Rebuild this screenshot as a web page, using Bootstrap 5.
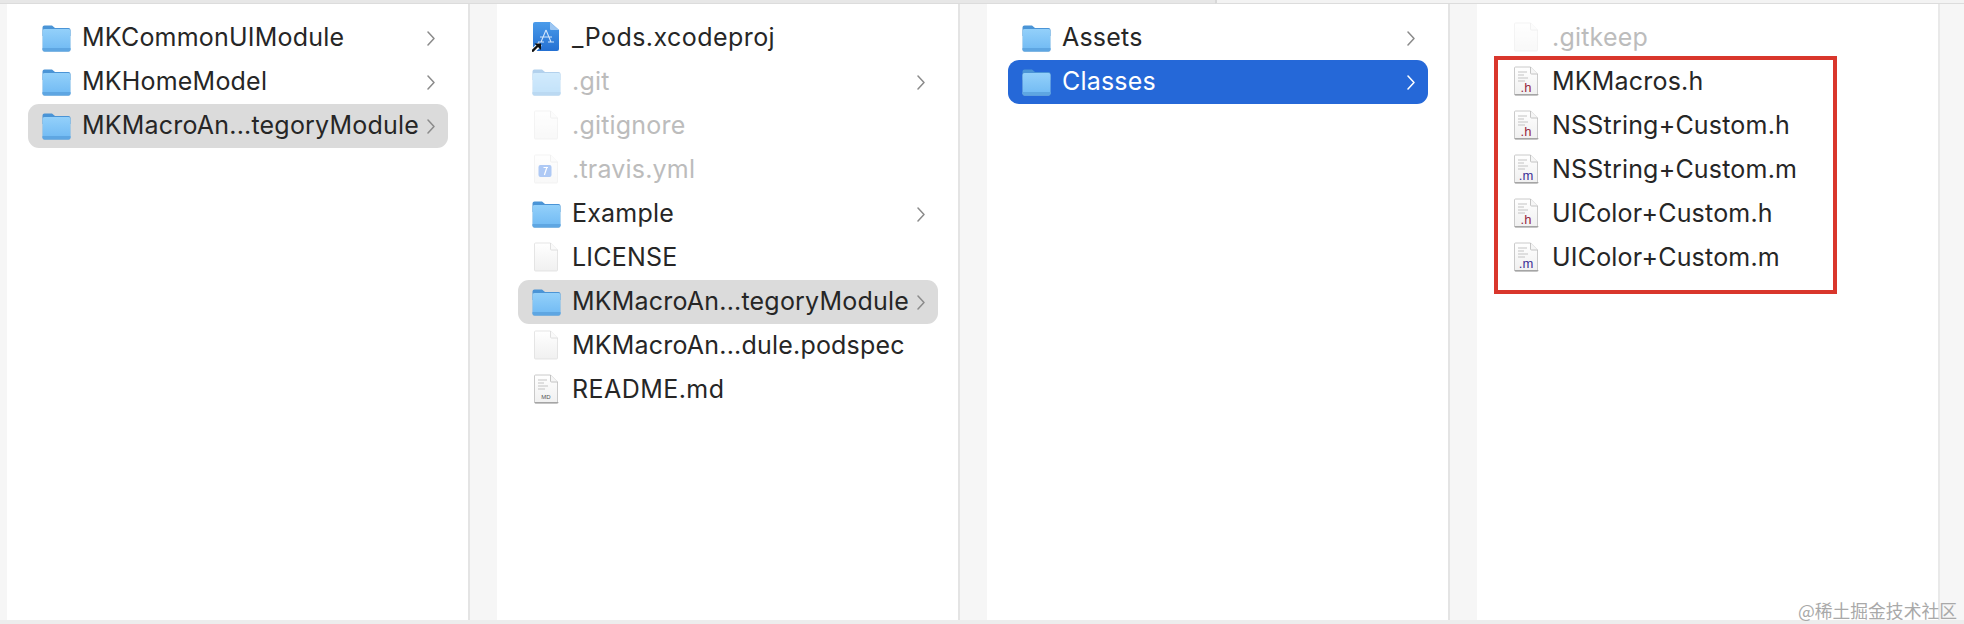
<!DOCTYPE html>
<html lang="en">
<head>
<meta charset="utf-8">
<title>Finder</title>
<link rel="stylesheet" href="https://cdn.jsdelivr.net/npm/bootstrap@5.3.0/dist/css/bootstrap.min.css">
<style>
html,body{height:624px;overflow:hidden;background:#f6f6f6}
body{font-family:Inter,"Liberation Sans",sans-serif;font-size:25px;color:#262626}
.topstrip{height:4px}
.topa{width:1215px;background:#e7e7e7;border-bottom:1px solid #dcdcdc}
.topb{background:#f3f3f3;border-bottom:1px solid #dcdcdc;border-left:2px solid #d8d8d8}
.browser{height:616px;padding-left:7px}
.pane{width:461px;background:#fff;padding-top:12px}
.gutter{width:29px;border-left:2px solid #e4e4e4;background:#f6f6f6}
.gutter-end{width:26px;border-left:2px solid #e9e9e9}
.entry{height:44px;margin-left:21px;margin-right:20px;padding-left:14px;padding-right:13px;border-radius:11px;white-space:nowrap}
.entry svg.ico{width:29px;height:30px;flex:none;margin-right:11px;margin-bottom:2px}
.fname{flex:1 1 auto;letter-spacing:.2px;line-height:42px;margin-bottom:2px}
.fname.wide{letter-spacing:.45px}
.chev{width:8px;height:15px;flex:none;fill:none;stroke:#8b8b8b;stroke-width:1.5;stroke-linecap:round;stroke-linejoin:round}
.hidden-file .fname{color:#bcbcbc}
.hidden-file svg.ico{opacity:.42}
.on-gray{background:#dbdbdb}
.on-blue{background:#2568d8;color:#fff}
.on-blue .chev{stroke:#fff}
.redbox{margin-left:17px;margin-right:101px;margin-top:-4px;border:4px solid #d9362c;padding-bottom:10px}
.redbox .entry{margin-left:0;margin-right:0;padding-left:14px}
.strip-bottom{height:4px;background:#ededed}
.jj-mark{position:absolute;right:7px;bottom:3px;font-family:"Noto Sans CJK SC",sans-serif;font-size:17.8px;line-height:22px;color:#a9a9a9}
</style>
</head>
<body class="position-relative m-0">
<svg width="0" height="0" class="position-absolute">
  <defs>
    <linearGradient id="fg" x1="0" y1="0" x2="0" y2="1"><stop offset="0" stop-color="#93d0fa"/><stop offset="1" stop-color="#6fb9f3"/></linearGradient>
    <linearGradient id="dg" x1="0" y1="0" x2="0" y2="1"><stop offset="0" stop-color="#ffffff"/><stop offset="1" stop-color="#f0f0f0"/></linearGradient>
    <linearGradient id="xg" x1="0" y1="0" x2="0" y2="1"><stop offset="0" stop-color="#4a9bea"/><stop offset="1" stop-color="#2470d2"/></linearGradient>
    <symbol id="folder" viewBox="0 0 29 30">
      <path d="M0.5 5.5a2 2 0 0 1 2-2h7.5l3 2.6h13.5a2 2 0 0 1 2 2v6H0.5z" fill="#4a94d6"/>
      <rect x="0.5" y="7.2" width="28" height="23" rx="2" fill="#8a8f96" opacity=".35" transform="translate(0 -.2)"/>
      <rect x="0.5" y="7" width="28" height="22.4" rx="2" fill="url(#fg)"/>
      <path d="M0.5 26h28v1.4a2 2 0 0 1-2 2h-24a2 2 0 0 1-2-2z" fill="#5ea6e2"/>
    </symbol>
    <symbol id="doc" viewBox="0 0 29 30">
      <path d="M3.5 1h15l7 7v20a1 1 0 0 1-1 1h-21a1 1 0 0 1-1-1V2a1 1 0 0 1 1-1z" fill="url(#dg)" stroke="#dedede" stroke-width=".8"/>
      <path d="M18.5 1v6a1 1 0 0 0 1 1h6" fill="#fafafa" stroke="#d8d8d8" stroke-width=".8"/>
    </symbol>
    <symbol id="docd" viewBox="0 0 29 30">
      <path d="M3.5 1h15l7 7v20a1 1 0 0 1-1 1h-21a1 1 0 0 1-1-1V2a1 1 0 0 1 1-1z" fill="url(#dg)" stroke="#bdbdbd" stroke-width=".8"/>
      <path d="M18.5 1v6a1 1 0 0 0 1 1h6" fill="#f6f6f6" stroke="#b8b8b8" stroke-width=".8"/>
      <path d="M2.6 28h23.8v.4a1 1 0 0 1-1 1H3.6a1 1 0 0 1-1-1z" fill="#a5a5a5"/>
      <path d="M6 6h9M6 9h6M6 12h10M6 15h7" stroke="#c4c4c4" stroke-width="1.2"/>
    </symbol>
    <symbol id="xcode" viewBox="0 0 29 30">
      <path d="M3 0h15l9 8v19a2 2 0 0 1-2 2H3a2 2 0 0 1-2-2V2a2 2 0 0 1 2-2z" fill="url(#xg)"/>
      <path d="M18 0v7a1 1 0 0 0 1 1h8z" fill="#9cc6f2"/>
      <path d="M14 8l-5 12M14 8l5 12M8 15h12M6 20h6M16 20h6" fill="none" stroke="#cfe3fa" stroke-width="1.1"/>
      <path d="M-1 31 L8 22" stroke="#fff" stroke-width="5"/>
      <path d="M0 29.5 L6 23.5" stroke="#111" stroke-width="2.4"/>
      <path d="M2.5 21.5h6.5v6.5z" fill="#111"/>
    </symbol>
    <symbol id="yml" viewBox="0 0 29 30">
      <use href="#doc"/>
      <rect x="6.5" y="11" width="13" height="12" rx="2" fill="#3f7fe8"/>
      <path d="M15 13l-2.6 8M11.5 13.5h4.5" stroke="#fff" stroke-width="1.2" fill="none"/>
    </symbol>
  </defs>
</svg>

<div class="d-flex topstrip"><div class="topa"></div><div class="topb flex-grow-1"></div></div>

<div class="d-flex browser">
  <div class="pane">
    <div class="entry d-flex align-items-center"><svg class="ico"><use href="#folder"/></svg><span class="fname">MKCommonUIModule</span><svg class="chev" viewBox="0 0 8 15"><path d="M1 1l6 6.5-6 6.5"/></svg></div>
    <div class="entry d-flex align-items-center"><svg class="ico"><use href="#folder"/></svg><span class="fname">MKHomeModel</span><svg class="chev" viewBox="0 0 8 15"><path d="M1 1l6 6.5-6 6.5"/></svg></div>
    <div class="entry on-gray d-flex align-items-center"><svg class="ico"><use href="#folder"/></svg><span class="fname">MKMacroAn...tegoryModule</span><svg class="chev" viewBox="0 0 8 15"><path d="M1 1l6 6.5-6 6.5"/></svg></div>
  </div>
  <div class="gutter"></div>
  <div class="pane">
    <div class="entry d-flex align-items-center"><svg class="ico"><use href="#xcode"/></svg><span class="fname wide">_Pods.xcodeproj</span></div>
    <div class="entry hidden-file d-flex align-items-center"><svg class="ico"><use href="#folder"/></svg><span class="fname">.git</span><svg class="chev" viewBox="0 0 8 15"><path d="M1 1l6 6.5-6 6.5"/></svg></div>
    <div class="entry hidden-file d-flex align-items-center"><svg class="ico"><use href="#doc"/></svg><span class="fname">.gitignore</span></div>
    <div class="entry hidden-file d-flex align-items-center"><svg class="ico"><use href="#yml"/></svg><span class="fname">.travis.yml</span></div>
    <div class="entry d-flex align-items-center"><svg class="ico"><use href="#folder"/></svg><span class="fname">Example</span><svg class="chev" viewBox="0 0 8 15"><path d="M1 1l6 6.5-6 6.5"/></svg></div>
    <div class="entry d-flex align-items-center"><svg class="ico"><use href="#doc"/></svg><span class="fname">LICENSE</span></div>
    <div class="entry on-gray d-flex align-items-center"><svg class="ico"><use href="#folder"/></svg><span class="fname">MKMacroAn...tegoryModule</span><svg class="chev" viewBox="0 0 8 15"><path d="M1 1l6 6.5-6 6.5"/></svg></div>
    <div class="entry d-flex align-items-center"><svg class="ico"><use href="#doc"/></svg><span class="fname">MKMacroAn...dule.podspec</span></div>
    <div class="entry d-flex align-items-center"><svg class="ico" viewBox="0 0 29 30"><use href="#docd"/><text x="14" y="25" font-size="6" text-anchor="middle" fill="#555" font-family="Liberation Sans">MD</text></svg><span class="fname wide">README.md</span></div>
  </div>
  <div class="gutter"></div>
  <div class="pane">
    <div class="entry d-flex align-items-center"><svg class="ico"><use href="#folder"/></svg><span class="fname">Assets</span><svg class="chev" viewBox="0 0 8 15"><path d="M1 1l6 6.5-6 6.5"/></svg></div>
    <div class="entry on-blue d-flex align-items-center"><svg class="ico"><use href="#folder"/></svg><span class="fname">Classes</span><svg class="chev" viewBox="0 0 8 15"><path d="M1 1l6 6.5-6 6.5"/></svg></div>
  </div>
  <div class="gutter"></div>
  <div class="pane">
    <div class="entry hidden-file d-flex align-items-center"><svg class="ico"><use href="#doc"/></svg><span class="fname">.gitkeep</span></div>
    <div class="redbox">
      <div class="entry d-flex align-items-center"><svg class="ico" viewBox="0 0 29 30"><use href="#docd"/><text x="14" y="26" font-size="13" text-anchor="middle" fill="#96283f" font-family="Liberation Sans">.h</text></svg><span class="fname">MKMacros.h</span></div>
      <div class="entry d-flex align-items-center"><svg class="ico" viewBox="0 0 29 30"><use href="#docd"/><text x="14" y="26" font-size="13" text-anchor="middle" fill="#96283f" font-family="Liberation Sans">.h</text></svg><span class="fname">NSString+Custom.h</span></div>
      <div class="entry d-flex align-items-center"><svg class="ico" viewBox="0 0 29 30"><use href="#docd"/><text x="14" y="26" font-size="13" text-anchor="middle" fill="#3c2f96" font-family="Liberation Sans">.m</text></svg><span class="fname">NSString+Custom.m</span></div>
      <div class="entry d-flex align-items-center"><svg class="ico" viewBox="0 0 29 30"><use href="#docd"/><text x="14" y="26" font-size="13" text-anchor="middle" fill="#96283f" font-family="Liberation Sans">.h</text></svg><span class="fname">UIColor+Custom.h</span></div>
      <div class="entry d-flex align-items-center"><svg class="ico" viewBox="0 0 29 30"><use href="#docd"/><text x="14" y="26" font-size="13" text-anchor="middle" fill="#3c2f96" font-family="Liberation Sans">.m</text></svg><span class="fname">UIColor+Custom.m</span></div>
    </div>
  </div>
  <div class="gutter-end"></div>
</div>
<div class="strip-bottom"></div>
<div class="jj-mark">@稀土掘金技术社区</div>
<script src="https://cdn.jsdelivr.net/npm/bootstrap@5.3.0/dist/js/bootstrap.bundle.min.js"></script>
</body>
</html>
